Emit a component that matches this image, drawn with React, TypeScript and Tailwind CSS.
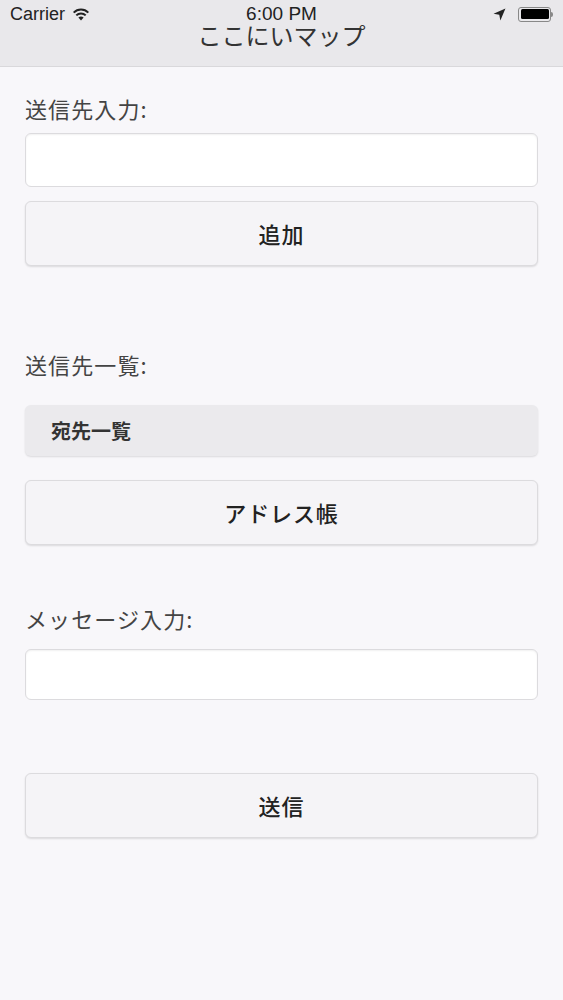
import React from "react";

const font = { fontFamily: '"Noto Sans CJK JP", "Noto Sans", sans-serif' };
const latin = { fontFamily: '"Liberation Sans", sans-serif' };

function Field({ tall }: { tall?: boolean }) {
  return (
    <div
      className={`${tall ? "h-[54px]" : "h-[51px]"} w-full rounded-md border border-[#dcdbde] bg-white shadow-[inset_0_1px_2px_rgba(0,0,0,0.06)]`}
    />
  );
}

function ActionButton({ label }: { label: string }) {
  return (
    <button className="flex h-[65px] w-full items-center justify-center rounded-md border border-[#dcdbde] bg-[#f5f4f7] text-[22px] font-medium tracking-[0.04em] text-[#222] shadow-[0_1px_2px_rgba(0,0,0,0.12)]">
      {label}
    </button>
  );
}

function Label({ text }: { text: string }) {
  return <p className="text-[22px] leading-none tracking-[0.05em] text-[#444]">{text}</p>;
}

export default function App() {
  return (
    <div className="min-h-[1000px] w-[563px] bg-[#f8f7fa]" style={font}>
      <header className="relative h-[67px] border-b border-[#d9d8db] bg-[#e9e8eb] pt-[3px]">
        <div className="flex h-[22px] items-center justify-between px-[10px]">
          <div className="flex items-center gap-[7px]">
            <span className="text-[18px] text-[#222]" style={latin}>
              Carrier
            </span>
            <svg width="18" height="13" viewBox="0 0 18 13">
              <path d="M9 12.5 L6.4 9.6 A3.8 3.8 0 0 1 11.6 9.6 Z" fill="#222" />
              <path d="M4.3 7.4 A6.6 6.6 0 0 1 13.7 7.4" stroke="#222" strokeWidth="2" fill="none" />
              <path d="M1.7 4.6 A10.2 10.2 0 0 1 16.3 4.6" stroke="#222" strokeWidth="2" fill="none" />
            </svg>
          </div>
          <div className="flex items-center gap-[12px]">
            <svg width="13" height="13" viewBox="0 0 12 12">
              <path d="M11.5 0.5 L0.5 5.2 L5.8 6.2 L6.8 11.5 Z" fill="#222" />
            </svg>
            <div className="flex items-center">
              <div className="h-[15px] w-[33px] rounded-[3px] border border-[#888] p-[1.5px]">
                <div className="h-full w-full rounded-[1.5px] bg-black" />
              </div>
              <div className="h-[5px] w-[2px] rounded-r-sm bg-[#888]" />
            </div>
          </div>
        </div>
        <span
          className="absolute left-1/2 top-[3px] -translate-x-1/2 text-[19px] leading-[22px] text-[#222]"
          style={latin}
        >
          6:00 PM
        </span>
        <h1 className="mt-[-5px] text-center text-[24px] leading-[30px] text-[#333]">ここにいマップ</h1>
      </header>

      <main className="px-[25px]">
        <div className="pt-[30px]">
          <Label text="送信先入力:" />
        </div>
        <div className="mt-[14px]">
          <Field tall />
        </div>
        <div className="mt-[14px]">
          <ActionButton label="追加" />
        </div>

        <div className="mt-[87px]">
          <Label text="送信先一覧:" />
        </div>
        <div className="mt-[30px] flex h-[51px] items-center rounded-md bg-[#ebeaed] px-[26px] text-[20px] font-semibold text-[#333] shadow-[0_1px_2px_rgba(0,0,0,0.12)]">
          宛先一覧
        </div>
        <div className="mt-[24px]">
          <ActionButton label="アドレス帳" />
        </div>

        <div className="mt-[62px]">
          <Label text="メッセージ入力:" />
        </div>
        <div className="mt-[20px]">
          <Field />
        </div>
        <div className="mt-[73px]">
          <ActionButton label="送信" />
        </div>
      </main>
    </div>
  );
}
